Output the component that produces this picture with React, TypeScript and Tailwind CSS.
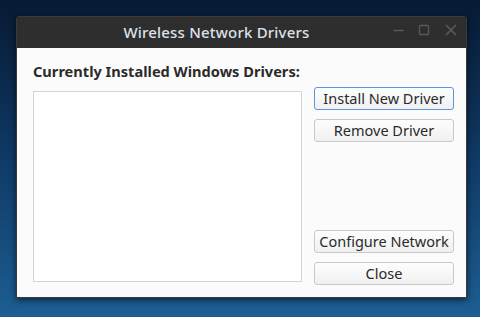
import { Minus, Square, X } from 'lucide-react';

const buttons = {
  top: ['Install New Driver', 'Remove Driver'],
  bottom: ['Configure Network', 'Close'],
};

function DialogButton({ label, focused }: { label: string; focused?: boolean }) {
  return (
    <button
      className={
        'h-[23px] w-[140px] rounded-[3px] border bg-gradient-to-b from-[#fdfdfd] to-[#f0f0f0] text-[14.5px] leading-none text-[#2a2a2a] ' +
        (focused ? 'border-[#5b95de]' : 'border-[#c8c8c8]')
      }
    >
      {label}
    </button>
  );
}

export default function App() {
  return (
    <div
      className="relative h-[317px] w-[480px] overflow-hidden bg-gradient-to-b from-[#071a33] via-[#0f3a66] to-[#1d5e93] pl-[16px] pt-[16px]"
      style={{ fontFamily: '"Noto Sans", "Open Sans", sans-serif' }}
    >
      {/* window */}
      <div className="flex h-[282px] w-[451px] flex-col overflow-hidden rounded-t-[3px] border border-[#3a3a3a] shadow-[0_2px_6px_rgba(0,0,0,0.6)]">
        <div className="relative flex h-[31px] shrink-0 items-center justify-center bg-[#2e2e2e] pr-[50px]">
          <span className="text-[15px] font-medium tracking-[0.2px] text-[#dde2e8]">Wireless Network Drivers</span>
          <div className="absolute right-[6px] top-[4px] flex h-[18px] items-center gap-[12px] text-[#5a5a5a]">
            <Minus size={15} strokeWidth={2.4} />
            <Square size={12} strokeWidth={2.6} />
            <X size={18} strokeWidth={2.2} />
          </div>
        </div>

        <div className="flex flex-1 flex-col bg-[#fbfbfb] pl-[16px] pr-[12px]">
          <h1 className="mt-[13px] text-[14.6px] font-bold leading-[20px] text-[#2b2b2b]">
            Currently Installed Windows Drivers:
          </h1>
          <div className="mt-[10px] flex gap-[12px]">
            <div className="h-[191px] w-[269px] border border-[#d4d4d4] bg-white" />
            <div className="-mt-[4px] flex h-[198px] flex-col justify-between">
              <div className="flex flex-col gap-[9px]">
                {buttons.top.map((b, i) => (
                  <DialogButton key={b} label={b} focused={i === 0} />
                ))}
              </div>
              <div className="flex flex-col gap-[9px]">
                {buttons.bottom.map((b) => (
                  <DialogButton key={b} label={b} />
                ))}
              </div>
            </div>
          </div>
        </div>
      </div>
    </div>
  );
}
